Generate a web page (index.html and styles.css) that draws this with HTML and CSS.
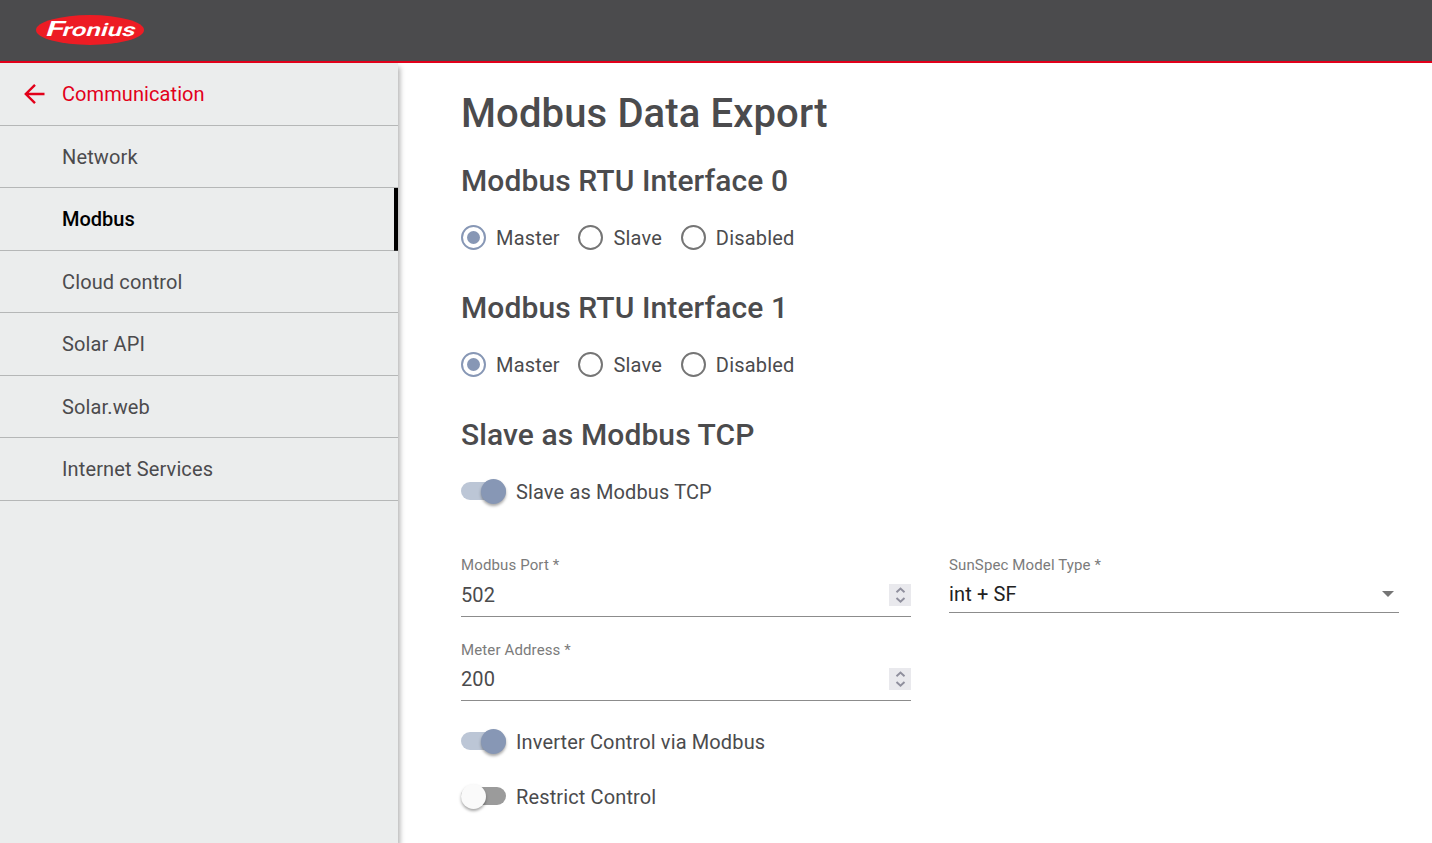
FILE: index.html
```html
<!DOCTYPE html>
<html lang="en">
<head>
<meta charset="utf-8">
<title>Modbus Data Export</title>
<link rel="stylesheet" href="styles.css">
</head>
<body>
<header class="topbar">
  <svg class="logo" width="110" height="32" viewBox="0 0 110 32" role="img" aria-label="Fronius">
    <ellipse cx="55" cy="16" rx="54" ry="15" fill="#ed1c24"/>
    <g transform="translate(0 22) skewX(-18)">
      <text class="logo-text logo-initial" x="9.500" y="0" textLength="18" lengthAdjust="spacingAndGlyphs">F</text>
      <text class="logo-text" x="26" y="-.500" textLength="73" lengthAdjust="spacingAndGlyphs">ronius</text>
    </g>
  </svg>
</header>
<div class="layout">
  <nav class="sidebar">
    <a class="nav-item nav-back"><svg class="back-icon" width="22" height="22" viewBox="0 0 22 22"><path d="M20.500 11H2.500M11 1.800 1.800 11l9.200 9.200" fill="none" stroke="#e2001a" stroke-width="2.400"/></svg>Communication</a>
    <a class="nav-item">Network</a>
    <a class="nav-item active">Modbus</a>
    <a class="nav-item">Cloud control</a>
    <a class="nav-item">Solar API</a>
    <a class="nav-item">Solar.web</a>
    <a class="nav-item">Internet Services</a>
  </nav>
  <main class="content">
    <h1 class="title">Modbus Data Export</h1>
    <section class="group">
      <h2 class="subtitle">Modbus RTU Interface 0</h2>
      <div class="radios">
        <label class="radio checked"><span class="ring"></span>Master</label>
        <label class="radio"><span class="ring"></span>Slave</label>
        <label class="radio"><span class="ring"></span>Disabled</label>
      </div>
    </section>
    <section class="group">
      <h2 class="subtitle">Modbus RTU Interface 1</h2>
      <div class="radios">
        <label class="radio checked"><span class="ring"></span>Master</label>
        <label class="radio"><span class="ring"></span>Slave</label>
        <label class="radio"><span class="ring"></span>Disabled</label>
      </div>
    </section>
    <section class="group">
      <h2 class="subtitle">Slave as Modbus TCP</h2>
      <label class="toggle on"><span class="track"><span class="thumb"></span></span>Slave as Modbus TCP</label>
    </section>
    <div class="fields">
      <div class="field">
        <span class="field-label">Modbus Port *</span>
        <div class="field-value"><span>502</span><svg class="spinner" width="22" height="22" viewBox="0 0 22 22"><path d="M7.500 8.300 11.500 4.500l4 3.800M7.500 14l4 3.800 4-3.800" fill="none" stroke="#8f8f9d" stroke-width="1.900"/></svg></div>
      </div>
      <div class="field select">
        <span class="field-label">SunSpec Model Type *</span>
        <div class="field-value"><span>int + SF</span><svg class="caret" width="12" height="6" viewBox="0 0 12 6"><path d="M0 0h12L6 6z" fill="#757575"/></svg></div>
      </div>
      <div class="field">
        <span class="field-label">Meter Address *</span>
        <div class="field-value"><span>200</span><svg class="spinner" width="22" height="22" viewBox="0 0 22 22"><path d="M7.500 8.300 11.500 4.500l4 3.800M7.500 14l4 3.800 4-3.800" fill="none" stroke="#8f8f9d" stroke-width="1.900"/></svg></div>
      </div>
    </div>
    <div class="switches">
      <label class="toggle on"><span class="track"><span class="thumb"></span></span>Inverter Control via Modbus</label>
      <label class="toggle"><span class="track"><span class="thumb"></span></span>Restrict Control</label>
    </div>
  </main>
</div>
</body>
</html>
```
FILE: styles.css
```css
* { box-sizing: border-box; }
body {
  margin: 0;
  height: 843px;
  display: flex;
  flex-direction: column;
  overflow: hidden;
  background: #fff;
  color: #4b4b4d;
  font: 400 20px/24px Roboto, "Liberation Sans", sans-serif;
  letter-spacing: 0.13px;
}
.topbar {
  flex: none;
  height: 63px;
  padding: 14px 35px 0;
  background: #4b4b4d;
  border-bottom: 2px solid #e2001a;
}
.logo { display: block; }
.logo-text {
  font: 600 18px Roboto, sans-serif;
  letter-spacing: 0;
  fill: #fff;
}
.logo-initial { font-size: 21px; }
.layout { flex: 1; display: flex; min-height: 0; }
.sidebar {
  flex: none;
  width: 398px;
  background: #ebeded;
  box-shadow: 2px 4px 5px rgba(0, 0, 0, 0.3);
  clip-path: inset(0 -12px 0 0);
}
.nav-item {
  display: flex;
  align-items: center;
  height: 62.5px;
  padding: 1px 0 0 62px;
  border-bottom: 1px solid #b5b7b7;
}
.nav-back { padding: 0 0 0 24px; color: #e2001a; letter-spacing: 0.08px; }
.back-icon { margin-right: 16px; }
.active {
  padding-top: 0;
  color: #000;
  font-weight: 500;
  letter-spacing: 0;
  border-bottom: 0;
  background:
    linear-gradient(#000, #000) right / 4px 100% no-repeat,
    linear-gradient(#b5b7b7, #b5b7b7) bottom / 100% 1px no-repeat;
}
.content { flex: 1; padding: 27px 33px 0 63px; }
.title { margin: 0; font-size: 40px; line-height: 48px; font-weight: 500; }
.group { height: 127px; }
.title + .group { margin-top: 25px; }
.subtitle { margin: 0; font-size: 30px; line-height: 36px; font-weight: 500; letter-spacing: 0.1px; }
.radios { display: flex; gap: 18.700px; margin-top: 26px; height: 25px; letter-spacing: 0.2px; }
.radio { display: flex; align-items: center; gap: 10px; }
.ring {
  width: 25px;
  height: 25px;
  border: 2px solid #757575;
  border-radius: 50%;
  display: grid;
  place-items: center;
}
.checked .ring { border-color: #8797b5; }
.checked .ring::after {
  content: "";
  width: 13px;
  height: 13px;
  border-radius: 50%;
  background: #8797b5;
}
.toggle { display: flex; align-items: center; gap: 10px; height: 26px; }
.group .toggle { margin-top: 26px; }
.track {
  display: flex;
  align-items: flex-start;
  width: 45px;
  height: 18px;
  margin-bottom: 2px;
  border-radius: 9px;
  background: #9b9b9b;
}
.thumb {
  width: 25px;
  height: 25px;
  margin-top: -3px;
  border-radius: 50%;
  background: #fafafa;
  box-shadow: 0 2px 3px rgba(0, 0, 0, 0.35);
}
.on .track { justify-content: flex-end; background: #bcc6d6; }
.on .thumb { background: #8797b5; }
.fields {
  display: grid;
  grid-template-columns: 450px 450px;
  column-gap: 38px;
  row-gap: 24px;
  align-items: start;
  margin-top: 12px;
}
.field { height: 61px; border-bottom: 1px solid #8c8c8c; }
.field:last-child { height: 60px; }
.field:last-child .field-value { margin-top: 8px; }
.select { height: 57px; }
.field-label { display: block; font-size: 15px; line-height: 18px; color: #7b7b7b; }
.field-value { display: flex; justify-content: space-between; align-items: center; margin-top: 9px; height: 24px; }
.select .field-value { margin-top: 8px; padding-right: 5px; color: #212121; }
.spinner { background: #e9e9ed; }
.switches { display: flex; flex-direction: column; gap: 29px; margin-top: 28px; }
```
